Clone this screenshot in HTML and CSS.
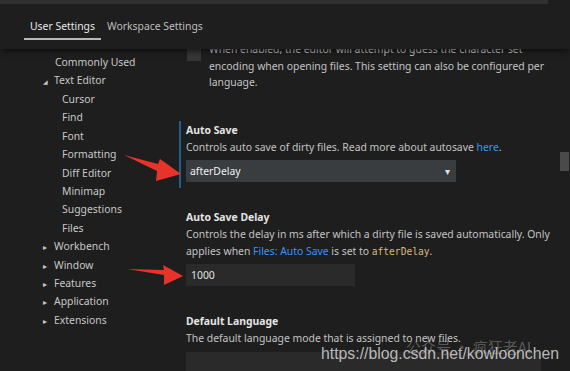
FILE: index.html
```html
<!DOCTYPE html>
<html lang="en">

<head>
    <meta charset="UTF-8">
    <title>Settings</title>
    <meta name="viewport" content="width=device-width, initial-scale=1.0">
    <link rel="stylesheet" href="styles.css">
</head>

<body>
    <div class="editor">
        <div class="header">
            <div class="search-strip"></div>
            <div class="tabs">
                <div class="tab active">User Settings</div>
                <div class="tab">Workspace Settings</div>
            </div>
        </div>
        <div class="body">
            <div class="toc">
                <div class="toc-item level0 no-arrow">Commonly Used</div>
                <div class="toc-item level0 open"><span class="twisty">&#9698;</span>Text Editor</div>
                <div class="toc-item level1">Cursor</div>
                <div class="toc-item level1">Find</div>
                <div class="toc-item level1">Font</div>
                <div class="toc-item level1">Formatting</div>
                <div class="toc-item level1">Diff Editor</div>
                <div class="toc-item level1">Minimap</div>
                <div class="toc-item level1">Suggestions</div>
                <div class="toc-item level1">Files</div>
                <div class="toc-item level0"><span class="twisty">&#9656;</span>Workbench</div>
                <div class="toc-item level0"><span class="twisty">&#9656;</span>Window</div>
                <div class="toc-item level0"><span class="twisty">&#9656;</span>Features</div>
                <div class="toc-item level0"><span class="twisty">&#9656;</span>Application</div>
                <div class="toc-item level0"><span class="twisty">&#9656;</span>Extensions</div>
            </div>
            <div class="settings">
                <div class="setting bool-setting">
                    <span class="checkbox"></span>
                    <div class="desc">When enabled, the editor will attempt to guess the character set encoding when opening files. This setting can also be configured per language.</div>
                </div>
                <div class="setting focused">
                    <div class="title">Auto Save</div>
                    <div class="desc">Controls auto save of dirty files. Read more about autosave <a href="#">here</a>.</div>
                    <div class="select"><span>afterDelay</span><span class="caret">&#9662;</span></div>
                </div>
                <div class="setting">
                    <div class="title">Auto Save Delay</div>
                    <div class="desc">Controls the delay in ms after which a dirty file is saved automatically. Only applies when <a href="#">Files: Auto Save</a> is set to <code>afterDelay</code>.</div>
                    <div class="text-input">1000</div>
                </div>
                <div class="setting">
                    <div class="title">Default Language</div>
                    <div class="desc">The default language mode that is assigned to new files.</div>
                    <div class="text-input wide"></div>
                </div>
            </div>
            <div class="scrollbar"><div class="thumb"></div></div>
        </div>
    </div>

    <svg class="arrows" width="570" height="371" viewBox="0 0 570 371">
        <polygon points="124,155 158,164 160,159 181,174 156,181 157,171" fill="#e8332a"/>
        <polygon points="127,269 164,270 163,265 183,276 164,285 164,275" fill="#e8332a"/>
    </svg>

    <div class="watermark">
        <span class="wm-faint">公众号 · 疯狂老AI</span>
        <span class="wm-url">https://blog.csdn.net/kowloonchen</span>
    </div>
</body>

</html>
```

FILE: styles.css
```css
body {
    margin: 0;
    padding: 0;
    width: 570px;
    height: 371px;
    overflow: hidden;
    background-color: #1e1e1e;
    font-family: 'Noto Sans', 'Open Sans', sans-serif;
    font-size: 10.4px;
    color: #c4c4c4;
}

.editor {
    height: 371px;
    display: flex;
    flex-direction: column;
}

.header {
    position: relative;
    z-index: 2;
    height: 49px;
    background: #1e1e1e;
    box-shadow: 0 4px 6px -2px rgba(0, 0, 0, 0.6);
}

.search-strip {
    width: 548px;
    height: 4px;
    background: #313131;
}

.tabs {
    display: flex;
    padding: 12px 0 0 24px;
}

.tab {
    padding: 0 6px;
    height: 22px;
    line-height: 20px;
    color: #bdbdbd;
}

.tab.active {
    color: #e8e8e8;
    border-bottom: 2px solid #b8b8b8;
}

.body {
    flex: 1;
    display: flex;
    overflow: hidden;
}

.toc {
    width: 179px;
    padding-top: 4px;
    flex-shrink: 0;
}

.toc-item {
    height: 18.43px;
    line-height: 18.43px;
    color: #c8c8c8;
    white-space: nowrap;
}

.toc-item.level0 {
    padding-left: 43px;
}

.toc-item.no-arrow {
    padding-left: 55px;
}

.toc-item.level1 {
    padding-left: 62px;
}

.twisty {
    display: inline-block;
    width: 11px;
    font-size: 8px;
    color: #c8c8c8;
}

.open .twisty {
    font-size: 6px;
}

.settings {
    flex: 1;
    margin-top: -9px;
}

.setting {
    border-left: 2px solid transparent;
    padding: 1px 0 6px 5px;
    margin-bottom: 20px;
}

.setting.focused {
    border-left-color: #1e5f8e;
}

.bool-setting {
    display: flex;
    padding-left: 6px;
    margin-bottom: 24px;
}

.checkbox {
    width: 14px;
    height: 14px;
    margin: 6px 8px 0 0;
    background: #363636;
    flex-shrink: 0;
}

.bool-setting .desc {
    width: 336px;
}

.title {
    font-weight: bold;
    color: #e4e4e4;
    line-height: 17px;
}

.desc {
    line-height: 16.5px;
    color: #c4c4c4;
}

.desc a {
    color: #3794ff;
    text-decoration: none;
}

.desc code {
    font-family: 'DejaVu Sans Mono', 'Liberation Mono', monospace;
    font-size: 9.6px;
    line-height: 1;
    color: #d7ba7d;
}

.setting .desc {
    max-width: 368px;
}

.select {
    margin-top: 5px;
    width: 260px;
    height: 22px;
    padding: 0 6px 0 4px;
    display: flex;
    align-items: center;
    justify-content: space-between;
    background: #3a3d3f;
    color: #f0f0f0;
}

.caret {
    font-size: 10px;
    color: #e0e0e0;
}

.text-input {
    margin-top: 5px;
    width: 164px;
    height: 22px;
    line-height: 22px;
    padding-left: 5px;
    background: #2a2a2a;
    color: #e0e0e0;
}

.text-input.wide {
    width: 350px;
}

.scrollbar {
    width: 9px;
    margin-right: 1px;
    flex-shrink: 0;
}

.thumb {
    margin-top: 103px;
    height: 19px;
    background: #4a4a4a;
}

.arrows {
    position: absolute;
    top: 0;
    left: 0;
    z-index: 5;
    pointer-events: none;
}

.watermark {
    position: absolute;
    left: 321px;
    top: 336px;
    z-index: 6;
    width: 245px;
    height: 32px;
}

.wm-faint {
    position: absolute;
    left: 85px;
    top: 0;
    font-family: 'Noto Sans CJK SC', sans-serif;
    font-size: 15px;
    color: rgba(200, 200, 200, 0.35);
    white-space: nowrap;
}

.wm-url {
    position: absolute;
    left: 0;
    top: 9px;
    font-family: 'Liberation Sans', Arial, sans-serif;
    font-size: 15.8px;
    color: rgba(215, 215, 215, 0.85);
    white-space: nowrap;
}
```
